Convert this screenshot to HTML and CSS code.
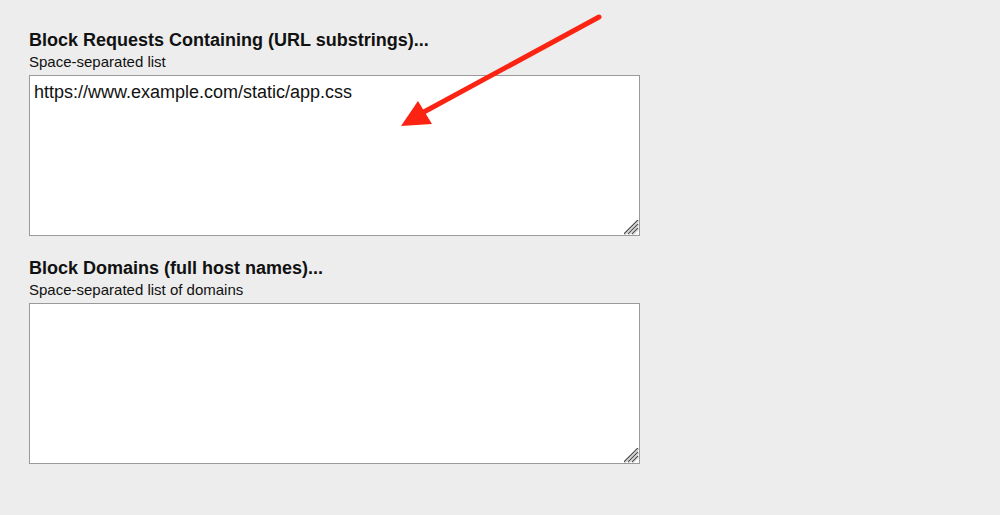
FILE: index.html
```html
<!DOCTYPE html>
<html lang="en">
<head>
    <meta charset="UTF-8">
    <title>Request Blocking Options</title>
    <link rel="stylesheet" href="styles.css">
</head>
<body>
    <div class="options">
        <div class="option-group">
            <h3>Block Requests Containing (URL substrings)...</h3>
            <label for="urls">Space-separated list</label>
            <textarea id="urls">https://www.example.com/static/app.css</textarea>
        </div>
        <div class="option-group">
            <h3>Block Domains (full host names)...</h3>
            <label for="domains">Space-separated list of domains</label>
            <textarea id="domains"></textarea>
        </div>
    </div>

    <svg class="arrow" width="1000" height="515" viewBox="0 0 1000 515">
        <line x1="599" y1="17" x2="422" y2="113" stroke="#fb2412" stroke-width="5" stroke-linecap="round"/>
        <polygon points="401,126 418,101 432,124" fill="#fb2412"/>
    </svg>
</body>
</html>
```

FILE: styles.css
```css
* {
    box-sizing: border-box;
}

body {
    margin: 0;
    background: #ededed;
    font-family: "Liberation Sans", Arial, sans-serif;
    color: #111;
}

.options {
    padding: 29px 29px;
    width: 670px;
}

.option-group {
    margin-bottom: 21px;
}

.option-group h3 {
    margin: 0;
    font-size: 18px;
    font-weight: 700;
    line-height: 22px;
}

.option-group label {
    display: block;
    font-size: 15px;
    line-height: 20px;
    padding-top: 1px;
    margin-bottom: 3px;
}

textarea {
    display: block;
    width: 611px;
    height: 161px;
    border: 1px solid #9a9a9a;
    background: #fff;
    font-family: "Liberation Sans", Arial, sans-serif;
    font-size: 18px;
    color: #111;
    padding: 6px 4px;
    margin: 0;
    resize: both;
    outline: none;
}

textarea::-webkit-resizer {
    background: url("data:image/svg+xml,%3Csvg xmlns='http://www.w3.org/2000/svg' width='16' height='16'%3E%3Cg stroke-width='1.3'%3E%3Cline x1='1' y1='15' x2='15' y2='1' stroke='%23444'/%3E%3Cline x1='5' y1='15' x2='15' y2='5' stroke='%23444'/%3E%3Cline x1='9' y1='15' x2='15' y2='9' stroke='%23444'/%3E%3Cline x1='2' y1='15.5' x2='15.5' y2='2' stroke='%23ccc'/%3E%3Cline x1='6' y1='15.5' x2='15.5' y2='6' stroke='%23ccc'/%3E%3Cline x1='10' y1='15.5' x2='15.5' y2='10' stroke='%23ccc'/%3E%3C/g%3E%3C/svg%3E") no-repeat right bottom;
}

.arrow {
    position: absolute;
    top: 0;
    left: 0;
    pointer-events: none;
}
```
